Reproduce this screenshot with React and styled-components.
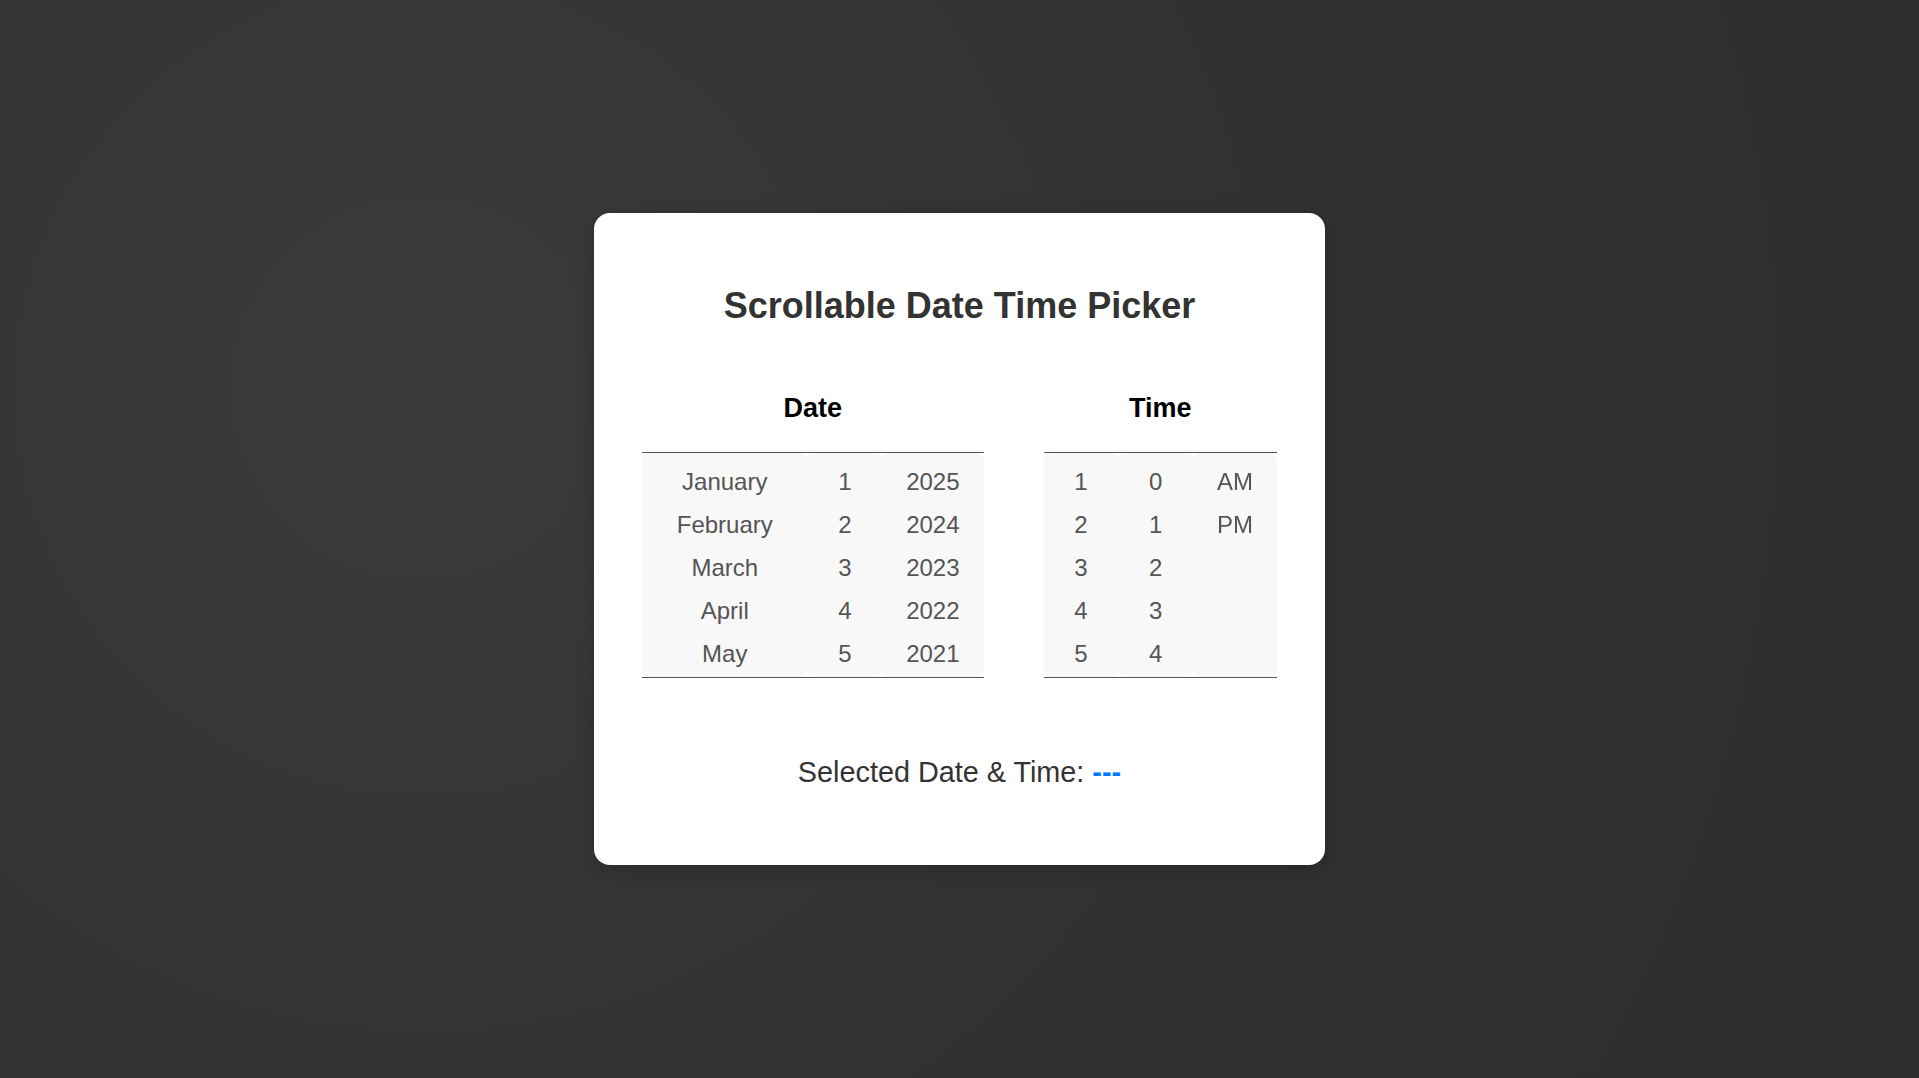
import React, { useState } from 'react';
import styled, { createGlobalStyle } from 'styled-components';

const months = [
    'January', 'February', 'March', 'April', 'May', 'June',
    'July', 'August', 'September', 'October', 'November', 'December'
];
const days = Array.from({ length: 31 }, (_, i) => i + 1);
const years = Array.from({ length: 76 }, (_, i) => 2025 - i);
const hours = Array.from({ length: 12 }, (_, i) => i + 1);
const minutes = Array.from({ length: 60 }, (_, i) => i);
const periods = ['AM', 'PM'];

function PickerColumn({ items, value, onPick }) {
    return (
        <Column>
            {items.map((item) => (
                <Item key={item} $active={value === item} onClick={() => onPick(item)}>
                    {item}
                </Item>
            ))}
        </Column>
    );
}

function App() {
    const [picked, setPicked] = useState({});

    const pick = (key) => (val) => setPicked((prev) => ({ ...prev, [key]: val }));

    const ready = ['month', 'day', 'year', 'hour', 'minute', 'period'].every((k) => picked[k] !== undefined);
    const result = ready
        ? `${picked.month} ${picked.day}, ${picked.year} ${picked.hour}:${String(picked.minute).padStart(2, '0')} ${picked.period}`
        : '---';

    return (
        <Page>
            <GlobalStyle />
            <Card>
                <Title>Scrollable Date Time Picker</Title>

                <Pickers>
                    <Group>
                        <GroupLabel>Date</GroupLabel>
                        <Wheel>
                            <PickerColumn items={months} value={picked.month} onPick={pick('month')} />
                            <PickerColumn items={days} value={picked.day} onPick={pick('day')} />
                            <PickerColumn items={years} value={picked.year} onPick={pick('year')} />
                        </Wheel>
                    </Group>

                    <Group>
                        <GroupLabel>Time</GroupLabel>
                        <Wheel>
                            <PickerColumn items={hours} value={picked.hour} onPick={pick('hour')} />
                            <PickerColumn items={minutes} value={picked.minute} onPick={pick('minute')} />
                            <PickerColumn items={periods} value={picked.period} onPick={pick('period')} />
                        </Wheel>
                    </Group>
                </Pickers>

                <Result>
                    Selected Date &amp; Time: <strong>{result}</strong>
                </Result>
            </Card>
        </Page>
    );
}

export default App;

const GlobalStyle = createGlobalStyle`
    html, body {
        margin: 0;
        padding: 0;
    }

    body {
        font-family: "Liberation Sans", Arial, sans-serif;
    }
`

const Page = styled.div`
    min-height: 100vh;
    display: flex;
    align-items: center;
    justify-content: center;
    background: radial-gradient(circle at 22% 36%, #3b3b3b 0%, #343434 35%, #2f2f2f 70%, #2d2d2d 100%);
`

const Card = styled.div`
    background: #fff;
    border-radius: 16px;
    padding: 72px 48px 76px;
    display: flex;
    flex-direction: column;
    align-items: center;
    box-shadow: 0 4px 20px rgba(0, 0, 0, 0.2);
`

const Title = styled.h1`
    margin: 0;
    font-size: 36px;
    font-weight: bold;
    color: #333;
`

const Pickers = styled.div`
    display: flex;
    gap: 60px;
    margin-top: 66px;
`

const Group = styled.div`
    display: flex;
    flex-direction: column;
    align-items: center;
`

const GroupLabel = styled.h3`
    margin: 0 0 28px;
    font-size: 27px;
    font-weight: bold;
    color: #000;
`

const Wheel = styled.div`
    display: flex;
    border-top: 1px solid #555;
    border-bottom: 1px solid #555;
`

const Column = styled.div`
    flex: none;
    height: 224px;
    box-sizing: border-box;
    padding: 7px 24px;
    overflow-y: auto;
    background: #f8f8f8;
    border-radius: 8px;
    scrollbar-width: none;

    &::-webkit-scrollbar {
        display: none;
    }
`

const Item = styled.div`
    padding: 8px 0;
    font-size: 24px;
    line-height: 27px;
    text-align: center;
    white-space: nowrap;
    cursor: pointer;
    border-radius: 6px;
    color: ${(p) => (p.$active ? '#007bff' : '#555')};
    background: ${(p) => (p.$active ? '#e6f0ff' : 'transparent')};
`

const Result = styled.p`
    margin: 78px 0 0;
    font-size: 28.8px;
    color: #333;

    strong {
        color: #007bff;
    }
`
